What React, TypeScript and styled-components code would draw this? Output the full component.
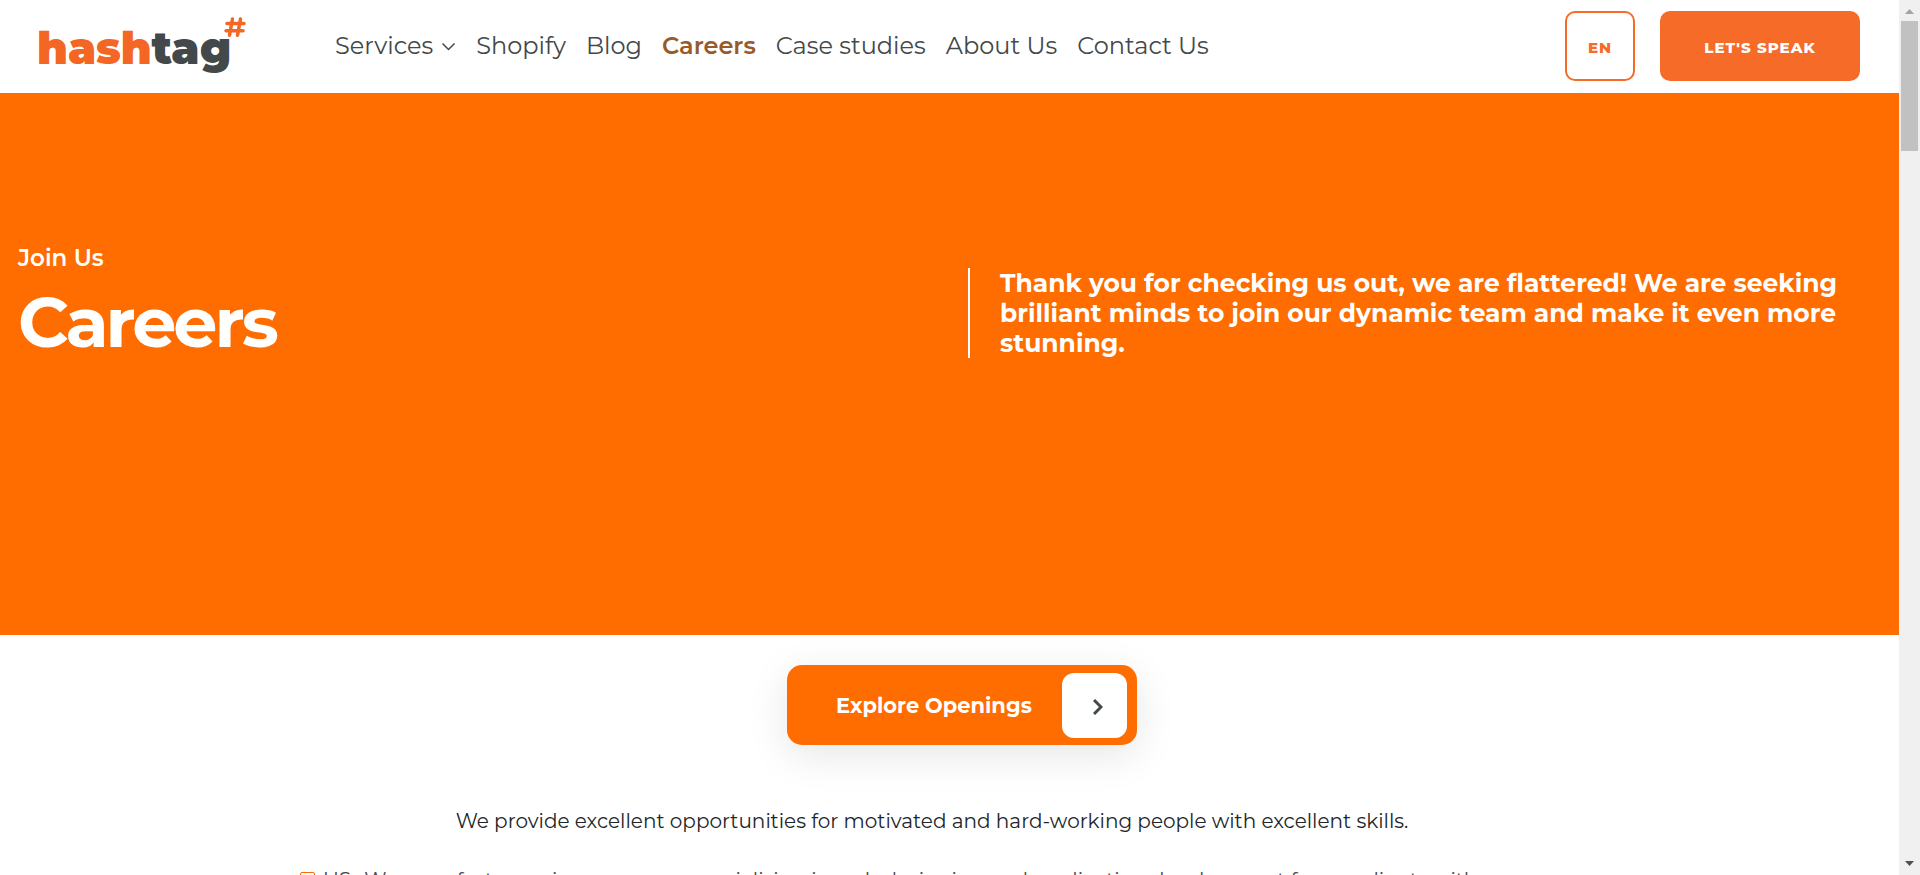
import React from 'react';
import styled, { createGlobalStyle } from 'styled-components';

const GlobalStyle = createGlobalStyle`
  * { box-sizing: border-box; }
  body {
    margin: 0;
    background: #fff;
    color: #212529;
    font-family: Montserrat, Inter, sans-serif;
  }
  h1, h2, p, ul { margin: 0; padding: 0; }
  a { color: inherit; text-decoration: none; }
  button { font-family: inherit; cursor: pointer; }
`;

const Shell = styled.div`
  display: flex;
  height: 100vh;
  overflow: hidden;
`;

const Page = styled.div`
  flex: 1;
  min-width: 0;
  overflow: hidden;
`;

const Header = styled.header`
  display: flex;
  align-items: center;
  padding: 11px 39px 12px 37px;
`;

const Logo = styled.a`
  display: flex;
  align-items: flex-start;
  width: 298px;
  height: 60px;
  font-size: 44px;
  font-weight: 900;
  line-height: 64px;
  color: #f46624;
`;

const LogoDark = styled.span`
  color: #43484b;
`;

const LogoMark = styled.svg`
  flex: none;
  width: 22px;
  height: 22px;
  margin-left: -7px;
`;

const Nav = styled.nav`
  display: flex;
  flex: 1;
  gap: 20px;
`;

const NavLink = styled.a<{ $active?: boolean }>`
  display: flex;
  align-items: center;
  gap: 8px;
  font-size: 24px;
  line-height: 30px;
  white-space: nowrap;
  color: ${(p) => (p.$active ? '#985a28' : '#43484b')};
  font-weight: ${(p) => (p.$active ? 600 : 400)};
`;

const Actions = styled.div`
  display: flex;
  gap: 25px;
`;

const ActionButton = styled.button<{ $filled?: boolean }>`
  width: ${(p) => (p.$filled ? 200 : 70)}px;
  height: 70px;
  padding: 3px 0 0;
  border: 2px solid #f66b28;
  border-radius: 10px;
  background: ${(p) => (p.$filled ? '#f66b28' : '#fff')};
  color: ${(p) => (p.$filled ? '#fff' : '#f66b28')};
  font-size: 15px;
  font-weight: 800;
  letter-spacing: 1px;
`;

const Hero = styled.section`
  display: grid;
  grid-template-columns: 968fr 931fr;
  align-items: start;
  height: 542px;
  padding-top: 148px;
  background: #ff6c00;
  color: #fff;
`;

const HeroTitle = styled.div`
  padding-left: 18px;
`;

const Kicker = styled.p`
  font-size: 23px;
  font-weight: 600;
  line-height: 34px;
`;

const Title = styled.h1`
  font-size: 70px;
  font-weight: 700;
  line-height: 94px;
  letter-spacing: -3px;
`;

const Lead = styled.h2`
  margin-top: 27px;
  padding: 0 40px 0 30px;
  border-left: 2px solid #fff;
  font-size: 25px;
  font-weight: 700;
  line-height: 30px;
`;

const Content = styled.main`
  display: flex;
  flex-direction: column;
  padding: 30px 290px 0;
`;

const ExploreButton = styled.button`
  display: flex;
  align-items: center;
  justify-content: space-between;
  align-self: center;
  width: 350px;
  height: 80px;
  margin-left: 25px;
  padding: 0 10px 0 49px;
  border: 0;
  border-radius: 15px;
  background: #ff6c00;
  box-shadow: 0 10px 40px rgba(0, 0, 0, 0.1);
  color: #fff;
  font-size: 21px;
  font-weight: 700;
`;

const ArrowTile = styled.span`
  display: grid;
  place-items: center;
  width: 65px;
  height: 65px;
  padding: 4px 0 0 6px;
  border-radius: 12px;
  background: #fff;
`;

const Intro = styled.p`
  margin: 61px 35px 0 0;
  font-size: 20px;
  line-height: 30px;
  text-align: center;
`;

const Offices = styled.ul`
  margin-top: 29px;
  padding-left: 10px;
  list-style: none;
`;

const Office = styled.li`
  display: flex;
  align-items: center;
  gap: 8px;
  color: #43484b;
  font-size: 20px;
  line-height: 30px;
  white-space: nowrap;
`;

const Bullet = styled.span`
  width: 15px;
  height: 16px;
  border: 1px solid #ff6c00;
  border-radius: 2px;
`;

const ScrollTrack = styled.aside`
  display: flex;
  flex-direction: column;
  align-items: center;
  flex: 0 0 21px;
  background: #f0f0f0;
`;

const ScrollThumb = styled.div`
  width: 17px;
  height: 130px;
  margin: 7px 0 auto;
  background: #c1c1c1;
`;

const ScrollArrow = styled.svg`
  display: block;
  width: 9px;
  height: 5px;
  margin: 9px 0 0;

  &:last-child { margin: 0 0 9px; }
`;

const links = ['Services', 'Shopify', 'Blog', 'Careers', 'Case studies', 'About Us', 'Contact Us'];

export default function App() {
  return (
    <>
      <GlobalStyle />
      <Shell>
        <Page>
          <Header>
            <Logo href="#" aria-label="hashtag">
              <span>hash</span>
              <LogoDark>tag</LogoDark>
              <LogoMark viewBox="0 0 22 22" fill="none" stroke="#f46624" strokeWidth="3.5" strokeLinecap="round" aria-hidden="true">
                <path d="M8.5 3 5.5 19.3M16.5 3l-3 16.3M3 7.5h17M2 14.7h17" />
              </LogoMark>
            </Logo>
            <Nav aria-label="Main">
              {links.map((label) => (
                <NavLink key={label} href="#" $active={label === 'Careers'}>
                  {label}
                  {label === 'Services' && (
                    <svg width="15" height="9" viewBox="0 0 15 9" fill="none" stroke="#43484b" strokeWidth="1.5" aria-hidden="true">
                      <path d="M1.5 1.5l6 6 6-6" />
                    </svg>
                  )}
                </NavLink>
              ))}
            </Nav>
            <Actions>
              <ActionButton type="button">EN</ActionButton>
              <ActionButton type="button" $filled>LET'S SPEAK</ActionButton>
            </Actions>
          </Header>
          <Hero>
            <HeroTitle>
              <Kicker>Join Us</Kicker>
              <Title>Careers</Title>
            </HeroTitle>
            <Lead>
              Thank you for checking us out, we are flattered! We are seeking brilliant minds to join our
              dynamic team and make it even more stunning.
            </Lead>
          </Hero>
          <Content>
            <ExploreButton type="button">
              Explore Openings
              <ArrowTile>
                <svg width="10" height="16" viewBox="0 0 10 16" fill="none" stroke="#43484b" strokeWidth="3" aria-hidden="true">
                  <path d="M1 1l7 7-7 7" />
                </svg>
              </ArrowTile>
            </ExploreButton>
            <Intro>
              We provide excellent opportunities for motivated and hard-working people with excellent skills.
            </Intro>
            <Offices>
              <Office>
                <Bullet />
                US- We are a fast-growing company specialising in web designing and application development for our clients with
              </Office>
            </Offices>
          </Content>
        </Page>
        <ScrollTrack aria-hidden="true">
          <ScrollArrow viewBox="0 0 9 5"><path d="M0 5h9L4.5 0z" fill="#a3a3a3" /></ScrollArrow>
          <ScrollThumb />
          <ScrollArrow viewBox="0 0 9 5"><path d="M0 0h9L4.5 5z" fill="#505050" /></ScrollArrow>
        </ScrollTrack>
      </Shell>
    </>
  );
}
